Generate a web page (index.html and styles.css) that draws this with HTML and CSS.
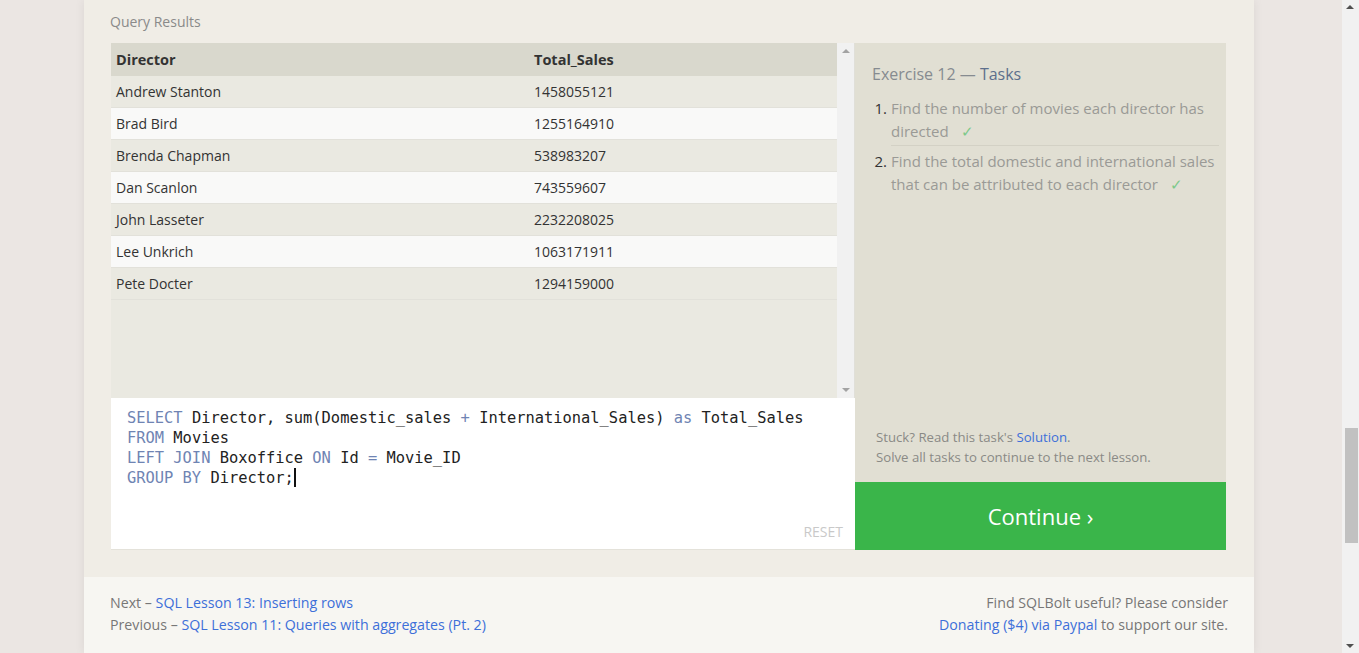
FILE: index.html
```html
<!DOCTYPE html>
<html>
<head>
<meta charset="utf-8">
<link rel="stylesheet" href="styles.css">
</head>
<body>
<div class="frame">
  <div class="card">
    <div class="lesson">
      <div class="label">Query Results</div>
      <div class="workspace">
        <div class="leftcol">
          <div class="results">
            <div class="table">
              <div class="row head"><div class="c1">Director</div><div class="c2">Total_Sales</div></div>
              <div class="row odd"><div class="c1">Andrew Stanton</div><div class="c2">1458055121</div></div>
              <div class="row even"><div class="c1">Brad Bird</div><div class="c2">1255164910</div></div>
              <div class="row odd"><div class="c1">Brenda Chapman</div><div class="c2">538983207</div></div>
              <div class="row even"><div class="c1">Dan Scanlon</div><div class="c2">743559607</div></div>
              <div class="row odd"><div class="c1">John Lasseter</div><div class="c2">2232208025</div></div>
              <div class="row even"><div class="c1">Lee Unkrich</div><div class="c2">1063171911</div></div>
              <div class="row odd"><div class="c1">Pete Docter</div><div class="c2">1294159000</div></div>
            </div>
            <div class="vscroll">
              <span class="arrow up"></span>
              <span class="arrow down"></span>
            </div>
          </div>
          <div class="editor">
            <div class="code"><div><span class="kw">SELECT</span> Director, sum(Domestic_sales <span class="kw">+</span> International_Sales) <span class="kw">as</span> Total_Sales</div><div><span class="kw">FROM</span> Movies</div><div><span class="kw">LEFT JOIN</span> Boxoffice <span class="kw">ON</span> Id <span class="kw">=</span> Movie_ID</div><div><span class="kw">GROUP BY</span> Director;<span class="cursor"></span></div></div>
            <div class="reset">RESET</div>
          </div>
        </div>
        <div class="rightcol">
          <div class="tasks">
            <div class="title">Exercise 12 — <span class="tasklink">Tasks</span></div>
            <ol class="list">
              <li class="item sep"><span class="num">1.</span><span class="txt">Find the number of movies each director has directed <span class="check">✓</span></span></li>
              <li class="item"><span class="num">2.</span><span class="txt">Find the total domestic and international sales that can be attributed to each director <span class="check">✓</span></span></li>
            </ol>
            <div class="help">
              <div>Stuck? Read this task's <a class="link">Solution</a>.</div>
              <div>Solve all tasks to continue to the next lesson.</div>
            </div>
          </div>
          <div class="continue">Continue ›</div>
        </div>
      </div>
    </div>
    <div class="footer">
      <div class="fleft">
        <div>Next – <a class="link">SQL Lesson 13: Inserting rows</a></div>
        <div>Previous – <a class="link">SQL Lesson 11: Queries with aggregates (Pt. 2)</a></div>
      </div>
      <div class="fright">
        <div>Find SQLBolt useful? Please consider</div>
        <div><a class="link">Donating ($4) via Paypal</a> to support our site.</div>
      </div>
    </div>
  </div>
</div>
<div class="pagescroll">
  <span class="parrow pup"></span>
  <span class="thumb"></span>
  <span class="parrow pdown"></span>
</div>
</body>
</html>
```
FILE: styles.css
```css
html, body {
  margin: 0;
  padding: 0;
  height: 653px;
  overflow: hidden;
  font-family: "Open Sans", "Noto Sans", sans-serif;
}
.frame {
  width: 1342px;
  height: 653px;
  background: #ebe6e3;
  display: flex;
}
.card {
  margin-left: 84px;
  width: 1170px;
  height: 653px;
  background: #f0ede6;
  box-shadow: 0 0 10px rgba(0,0,0,0.07);
  display: flex;
  flex-direction: column;
}
.lesson {
  padding: 12px 26px 27px 26px;
}
.label {
  font-size: 14px;
  line-height: 20px;
  color: #8a8a8a;
  margin-bottom: 11px;
}
.workspace {
  display: grid;
  grid-template-columns: 744px 371px;
  margin-left: 1px;
}
.leftcol {
  display: flex;
  flex-direction: column;
}
.results {
  height: 355px;
  display: flex;
  background: #eae9e1;
}
.table {
  width: 726px;
}
.row {
  display: flex;
  box-sizing: border-box;
  height: 32px;
  padding-top: 1px;
  border-bottom: 1px solid #e2e1da;
  font-size: 14px;
  line-height: 30px;
  color: #333;
}
.row.head {
  height: 33px;
  line-height: 32px;
  background: #d9d8cd;
  border-bottom: none;
  font-weight: 700;
  font-size: 14.5px;
  color: #333;
}
.row.odd { background: #eae9e1; }
.row.even { background: #f9f9f8; }
.c1 {
  width: 418px;
  padding-left: 5px;
}
.c2 {
  flex: 1;
}
.vscroll {
  width: 17px;
  background: #f1f1f1;
  display: flex;
  flex-direction: column;
  justify-content: space-between;
  align-items: center;
  padding: 6px 0;
  border-right: 1px solid #e0dfd8;
}
.arrow {
  width: 0;
  height: 0;
  border-left: 4px solid transparent;
  border-right: 4px solid transparent;
}
.arrow.up { border-bottom: 4px solid #a3a3a3; }
.arrow.down { border-top: 4px solid #a3a3a3; }
.editor {
  height: 152px;
  background: #fff;
  display: flex;
  flex-direction: column;
  box-sizing: border-box;
  padding: 10px 12px 7px 16px;
  border-bottom: 1px solid #e4e2da;
}
.code {
  font-family: "DejaVu Sans Mono", "Liberation Mono", monospace;
  font-size: 15.4px;
  line-height: 20px;
  color: #222;
  white-space: pre;
}
.kw { color: #6f84b3; }
.cursor {
  display: inline-block;
  width: 2px;
  height: 19px;
  background: #111;
  vertical-align: -4px;
}
.reset {
  margin-top: auto;
  align-self: flex-end;
  font-size: 14px;
  line-height: 20px;
  color: #c9c9c9;
}
.rightcol {
  display: flex;
  flex-direction: column;
}
.tasks {
  height: 439px;
  box-sizing: border-box;
  background: #e1dfd3;
  padding: 20px 7px 15px 17px;
  display: flex;
  flex-direction: column;
}
.title {
  font-size: 16px;
  line-height: 22px;
  color: #868b90;
}
.tasklink { color: #5d6f8c; }
.list {
  margin: 12px 0 0 0;
  padding: 0;
  list-style: none;
}
.item {
  display: grid;
  grid-template-columns: 15px 1fr;
  column-gap: 4px;
  font-size: 15px;
  line-height: 23px;
  padding: 0;
}
.item + .item {
  padding-top: 4px;
}
.num {
  text-align: right;
  color: #333;
}
.txt {
  color: #9a9a96;
}
.item.sep .txt {
  padding-bottom: 2px;
  border-bottom: 1px solid #d3d1c5;
}
.check {
  color: #7cc98a;
  margin-left: 8px;
}
.help {
  margin-top: auto;
  padding-left: 4px;
  font-size: 13.2px;
  line-height: 20px;
  color: #8a8a86;
}
.link {
  color: #3d6fd9;
  text-decoration: none;
}
.continue {
  height: 68px;
  background: #3ab54a;
  color: #fff;
  font-size: 22px;
  line-height: 68px;
  text-align: center;
}
.footer {
  flex: 1;
  background: #f7f6f2;
  display: flex;
  justify-content: space-between;
  padding: 15px 26px 0 26px;
  font-size: 14.2px;
  line-height: 22px;
  color: #777;
}
.fright {
  text-align: right;
}
.pagescroll {
  position: fixed;
  top: 0;
  right: 0;
  width: 17px;
  height: 653px;
  background: #f1f1f1;
}
.parrow {
  position: absolute;
  left: 4px;
  width: 0;
  height: 0;
  border-left: 4px solid transparent;
  border-right: 4px solid transparent;
}
.pup { top: 5px; border-bottom: 4px solid #505050; }
.pdown { bottom: 5px; border-top: 4px solid #505050; }
.thumb {
  position: absolute;
  left: 3px;
  top: 428px;
  width: 13px;
  height: 115px;
  background: #c1c1c1;
}
```
